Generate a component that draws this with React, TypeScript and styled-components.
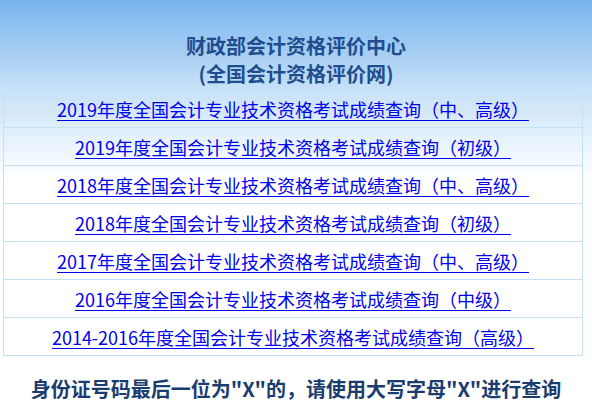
import { createGlobalStyle, styled } from 'styled-components';

const GlobalStyle = createGlobalStyle`
	html,
	body {
		margin: 0;
		padding: 0;
		background: #fff;
	}
	body {
		background: linear-gradient(#78b4ee 0, #c9e2f8 92px, #ffffff 180px) no-repeat;
		font-family: 'Noto Sans CJK SC', 'Noto Sans', sans-serif;
	}
`;

const Page = styled.div`
	width: 592px;
	height: 408px;
	overflow: hidden;
`;

const Header = styled.h1`
	margin: 0;
	padding-top: 32px;
	text-align: center;
	font-size: 20px;
	line-height: 28px;
	font-weight: 700;
	color: #1f4d8e;
`;

const Table = styled.div`
	margin: 1px 0 0 3px;
	width: 580px;
	border: 1px solid #c2e2f2;
	box-sizing: border-box;
`;

const Row = styled.div`
	height: 38px;
	display: flex;
	align-items: center;
	justify-content: center;
	box-sizing: border-box;
	border-top: 1px solid #c2e2f2;

	&:first-child {
		border-top: none;
		height: 37px;
	}
`;

const Link = styled.a`
	font-size: 18px;
	line-height: 24px;
	color: #0000ee;
	text-decoration: underline;
	text-underline-offset: 3px;
	cursor: pointer;
`;

const Notice = styled.p`
	margin: 19px 0 0;
	text-align: center;
	font-size: 20px;
	line-height: 28px;
	font-weight: 700;
	color: #1b3c6e;
`;

const links = [
	'2019年度全国会计专业技术资格考试成绩查询（中、高级）',
	'2019年度全国会计专业技术资格考试成绩查询（初级）',
	'2018年度全国会计专业技术资格考试成绩查询（中、高级）',
	'2018年度全国会计专业技术资格考试成绩查询（初级）',
	'2017年度全国会计专业技术资格考试成绩查询（中、高级）',
	'2016年度全国会计专业技术资格考试成绩查询（中级）',
	'2014-2016年度全国会计专业技术资格考试成绩查询（高级）'
];

export default function App() {
	return (
		<Page>
			<GlobalStyle />
			<Header>
				财政部会计资格评价中心
				<br />
				(全国会计资格评价网)
			</Header>
			<Table>
				{links.map(text => (
					<Row key={text}>
						<Link>{text}</Link>
					</Row>
				))}
			</Table>
			<Notice>身份证号码最后一位为"X"的，请使用大写字母"X"进行查询</Notice>
		</Page>
	);
}
